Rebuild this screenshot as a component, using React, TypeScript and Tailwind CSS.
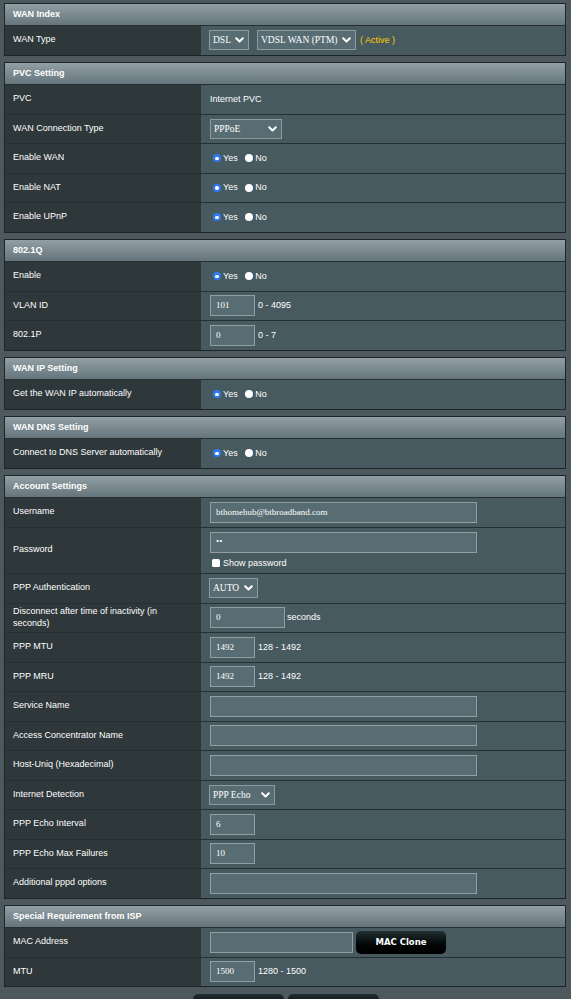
import React from "react";

type C = { children?: React.ReactNode };

const Chevron = () => (
  <svg width="9" height="6" viewBox="0 0 9 6" className="shrink-0">
    <path d="M1.2 1.2 L4.5 4.5 L7.8 1.2" fill="none" stroke="white" strokeWidth="2" strokeLinecap="round" strokeLinejoin="round" />
  </svg>
);

const Section = ({ title, children }: { title: string } & C) => (
  <div className="border border-[#1e2528] mb-[6.5px]">
    <div className="h-[21px] bg-linear-to-b from-[#92a0a5] to-[#66757c] pl-[8px] flex items-center font-bold text-white">
      {title}
    </div>
    {children}
  </div>
);

const Row = ({ label, children, tall }: { label: React.ReactNode; tall?: string } & C) => (
  <div className={"flex border-t border-[#262f32] " + (tall ?? "h-[29.5px]")}>
    <div className="w-[196px] shrink-0 bg-[#2e3739] pl-[8px] pr-[14px] pb-[2px] flex items-center leading-[12px]">{label}</div>
    <div className="flex-1 bg-[#475a5f] pl-[9px] flex items-center">{children}</div>
  </div>
);

const Select = ({ text, className }: { text: string; className: string }) => (
  <div
    className={
      "h-[20px] bg-[#576d73] border border-[#8d9a9e] flex items-center justify-between pl-[3px] pr-[4px] font-['Liberation_Serif','Times_New_Roman',serif] text-[9.5px] text-white " +
      className
    }
  >
    <span>{text}</span>
    <Chevron />
  </div>
);

const Input = ({ value, className }: { value?: string; className: string }) => (
  <div
    className={
      "h-[21px] bg-[#576d73] border border-[#929ea1] flex items-center pl-[5px] font-['Liberation_Serif','Times_New_Roman',serif] text-[9px] text-white " +
      className
    }
  >
    {value}
  </div>
);

const YesNo = () => (
  <div className="flex items-center ml-[3px]">
    <span className="w-[8px] h-[8px] rounded-full bg-[#2f7bf5] flex items-center justify-center">
      <span className="w-[3.5px] h-[3.5px] rounded-full bg-white" />
    </span>
    <span className="ml-[2px]">Yes</span>
    <span className="ml-[7px] w-[8px] h-[8px] rounded-full bg-white" />
    <span className="ml-[2.5px]">No</span>
  </div>
);

export default function App() {
  return (
    <div className="min-h-screen bg-[#4d595d] pt-[3px] pl-[4px] pr-[5px] font-['Liberation_Sans',Arial,sans-serif] text-white text-[9px]">
      <Section title="WAN Index">
        <Row label="WAN Type">
          <Select text="DSL" className="w-[40px] -ml-[1px]" />
          <Select text="VDSL WAN (PTM)" className="w-[99px] ml-[8px]" />
          <span className="ml-[4px] text-[#ffcc00]">( Active )</span>
        </Row>
      </Section>

      <Section title="PVC Setting">
        <Row label="PVC">
          <span>Internet PVC</span>
        </Row>
        <Row label="WAN Connection Type">
          <Select text="PPPoE" className="w-[72px]" />
        </Row>
        <Row label="Enable WAN">
          <YesNo />
        </Row>
        <Row label="Enable NAT">
          <YesNo />
        </Row>
        <Row label="Enable UPnP">
          <YesNo />
        </Row>
      </Section>

      <Section title="802.1Q">
        <Row label="Enable">
          <YesNo />
        </Row>
        <Row label="VLAN ID">
          <Input value="101" className="w-[45px]" />
          <span className="ml-[3px]">0 - 4095</span>
        </Row>
        <Row label="802.1P">
          <Input value="0" className="w-[45px]" />
          <span className="ml-[3px]">0 - 7</span>
        </Row>
      </Section>

      <Section title="WAN IP Setting">
        <Row label="Get the WAN IP automatically">
          <YesNo />
        </Row>
      </Section>

      <Section title="WAN DNS Setting">
        <Row label="Connect to DNS Server automatically">
          <YesNo />
        </Row>
      </Section>

      <Section title="Account Settings">
        <Row label="Username">
          <Input value="bthomehub@btbroadband.com" className="w-[267px]" />
        </Row>
        <Row label="Password" tall="h-[46.5px]">
          <div className="flex flex-col pt-[1px]">
            <Input value="••" className="w-[267px] text-[7px]" />
            <div className="flex items-center mt-[4px] ml-[2px]">
              <span className="w-[8px] h-[8px] bg-white rounded-[1.5px]" />
              <span className="ml-[3px]">Show password</span>
            </div>
          </div>
        </Row>
        <Row label="PPP Authentication">
          <Select text="AUTO" className="w-[49px] -ml-[1px]" />
        </Row>
        <Row label="Disconnect after time of inactivity (in seconds)">
          <Input value="0" className="w-[75px]" />
          <span className="ml-[2px]">seconds</span>
        </Row>
        <Row label="PPP MTU">
          <Input value="1492" className="w-[45px]" />
          <span className="ml-[3px]">128 - 1492</span>
        </Row>
        <Row label="PPP MRU">
          <Input value="1492" className="w-[45px]" />
          <span className="ml-[3px]">128 - 1492</span>
        </Row>
        <Row label="Service Name">
          <Input className="w-[267px]" />
        </Row>
        <Row label="Access Concentrator Name">
          <Input className="w-[267px]" />
        </Row>
        <Row label="Host-Uniq (Hexadecimal)">
          <Input className="w-[267px]" />
        </Row>
        <Row label="Internet Detection">
          <Select text="PPP Echo" className="w-[66px] -ml-[1px]" />
        </Row>
        <Row label="PPP Echo Interval">
          <Input value="6" className="w-[45px]" />
        </Row>
        <Row label="PPP Echo Max Failures">
          <Input value="10" className="w-[45px]" />
        </Row>
        <Row label="Additional pppd options">
          <Input className="w-[267px]" />
        </Row>
      </Section>

      <Section title="Special Requirement from ISP">
        <Row label="MAC Address">
          <Input className="w-[143px]" />
          <button className="ml-[3px] h-[23px] w-[90px] rounded-[5px] bg-linear-to-b from-[#223033] to-[#000] text-white font-bold text-[8.5px] font-['DejaVu_Sans',Verdana,sans-serif]">
            MAC Clone
          </button>
        </Row>
        <Row label="MTU">
          <Input value="1500" className="w-[45px]" />
          <span className="ml-[3px]">1280 - 1500</span>
        </Row>
      </Section>

      <div className="flex justify-center gap-[4px] -ml-[4px] -mr-[5px]">
        <button className="h-[23px] w-[91px] rounded-[5px] bg-linear-to-b from-[#223033] to-[#000]" />
        <button className="h-[23px] w-[91px] rounded-[5px] bg-linear-to-b from-[#223033] to-[#000]" />
      </div>
    </div>
  );
}
